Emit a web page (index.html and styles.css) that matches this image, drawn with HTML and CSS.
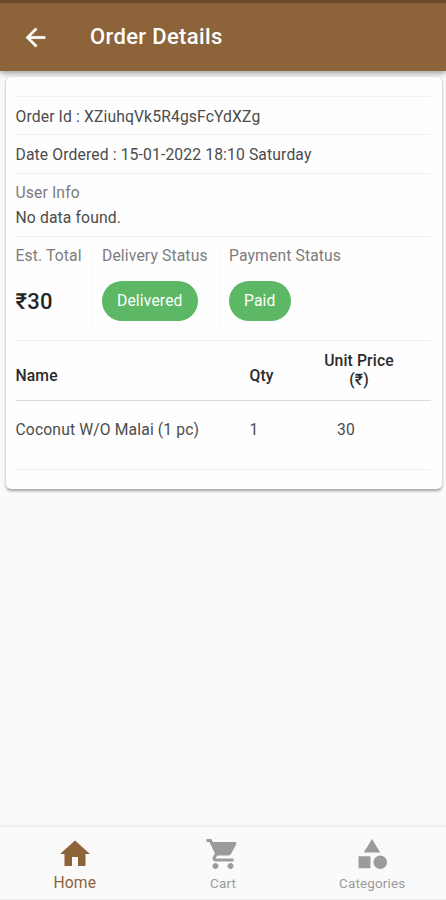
FILE: index.html
```html
<!DOCTYPE html>
<html lang="en">
<head>
<meta charset="utf-8">
<title>Order Details</title>
<link rel="stylesheet" href="styles.css">
</head>
<body>
<header class="appbar">
  <svg class="back" viewBox="0 0 24 24"><path d="M20 11H7.83l5.59-5.59L12 4l-8 8 8 8 1.41-1.41L7.83 13H20v-2z"/></svg>
  <h1>Order Details</h1>
</header>
<main class="content">
  <section class="card">
    <div class="row order-id"><span>Order Id : XZiuhqVk5R4gsFcYdXZg</span></div>
    <div class="row date"><span>Date Ordered : 15-01-2022 18:10 Saturday</span></div>
    <div class="row user"><span class="label">User Info</span><span>No data found.</span></div>
    <div class="row summary">
      <div class="cell"><span class="label">Est. Total</span><strong class="total">₹30</strong></div>
      <div class="cell delivery"><span class="label">Delivery Status</span><span class="chip">Delivered</span></div>
      <div class="cell payment"><span class="label">Payment Status</span><span class="chip">Paid</span></div>
    </div>
    <div class="row grid head"><span>Name</span><span>Qty</span><span class="price">Unit Price<br>(₹)</span></div>
    <div class="row grid item"><span>Coconut W/O Malai (1 pc)</span><span>1</span><span class="amount">30</span></div>
    <div class="row end"></div>
  </section>
</main>
<nav class="tabs">
  <a class="tab active"><svg viewBox="0 0 24 24"><path d="M10 20v-6h4v6h5v-8h3L12 3 2 12h3v8z"/></svg><span>Home</span></a>
  <a class="tab"><svg viewBox="0 0 24 24"><path d="M7 18c-1.1 0-1.99.9-1.99 2S5.9 22 7 22s2-.9 2-2-.9-2-2-2zM1 2v2h2l3.6 7.59-1.35 2.45c-.16.28-.25.61-.25.96 0 1.1.9 2 2 2h12v-2H7.42c-.14 0-.25-.11-.25-.25l.03-.12.9-1.63h7.45c.75 0 1.41-.41 1.75-1.03l3.58-6.49A1 1 0 0 0 20 4H5.21l-.94-2H1zm16 16c-1.1 0-1.99.9-1.99 2s.89 2 1.99 2 2-.9 2-2-.9-2-2-2z"/></svg><span>Cart</span></a>
  <a class="tab categories"><svg viewBox="0 0 24 24"><path d="M12 2l-5.500 9h11z"/><circle cx="17.500" cy="17.500" r="4.500"/><path d="M3 13.500h8v8H3z"/></svg><span>Categories</span></a>
</nav>
</body>
</html>
```
FILE: styles.css
```css
* { box-sizing: border-box; }
body {
  margin: 0;
  height: 900px;
  display: flex;
  flex-direction: column;
  background: #fafafa;
  color: #4c4c4c;
  font: 15.7px/20px Roboto, sans-serif;
  letter-spacing: 0.13px;
  overflow: hidden;
}
.appbar {
  height: 71px;
  flex: none;
  display: flex;
  align-items: center;
  padding: 0 0 0 20.5px;
  background: #8d6339;
  border-top: 3px solid #6a492b;
  color: #fff;
  box-shadow: 0 2px 6px rgba(0, 0, 0, .4);
}
.back { width: 29px; height: 29px; fill: #fff; stroke: #fff; stroke-width: .3; }
h1 { margin: 0 0 0 40.5px; font-size: 22px; font-weight: 500; line-height: 28px; letter-spacing: 0.35px; }
.content { flex: 1; padding: 6px 4px 0 6px; }
.card {
  height: 412px;
  padding: 19px 11px 0 9.5px;
  background: #fefefe;
  border-radius: 5px;
  box-shadow: 0 1.5px 3px rgba(0, 0, 0, .35);
}
.row { border-top: 1px solid #f0f0f0; }
.row span { white-space: nowrap; }
.order-id { height: 38px; padding-top: 9.5px; }
.date { height: 39px; padding-top: 10px; }
.user { height: 63px; padding-top: 9px; display: flex; flex-direction: column; gap: 5px; }
.label { color: #7c7c7c; }
.summary { height: 104px; display: flex; padding: 9px 0 10px; }
.cell { display: flex; flex-direction: column; align-items: flex-start; width: 76.5px; }
.delivery, .payment { border-left: 1px solid #f4f4f4; padding-left: 9px; }
.delivery { width: 127px; }
.payment { width: 150px; }
.total { margin-top: 24px; font-size: 22px; line-height: 24px; font-weight: 500; letter-spacing: 0.3px; color: #252525; }
.chip {
  margin-top: 15px;
  height: 40px;
  padding: 0 15px;
  border-radius: 20px;
  background: #5cb864;
  color: #fff;
  line-height: 40px;
}
.grid { display: grid; grid-template-columns: 234px 59.5px 100px; }
.head { height: 60px; padding-top: 10px; color: #2b2b2b; font-weight: 500; font-size: 15.7px; line-height: 19px; }
.head span { padding-top: 15px; }
.head .price { padding-top: 0; text-align: center; }
.item { height: 69px; padding-top: 19px; border-color: #ddd; }
.amount { padding-left: 28px; }
.tabs {
  flex: none;
  height: 75px;
  display: grid;
  grid-template-columns: repeat(3, 1fr);
  border-top: 2px solid #f0f0f0;
  border-bottom: 1px solid #ededed;
}
.tab { display: flex; flex-direction: column; align-items: center; padding-top: 9px; color: #9b9b9b; font-size: 13.5px; line-height: 16px; }
.tab svg { width: 36px; height: 36px; fill: currentColor; }
.tab span { margin-top: 3px; }
.tab.active { color: #8d6339; font-size: 15.7px; padding-left: 1px; }
.tab.active span { margin-top: 3px; }
.tab.categories { padding-left: 1px; }
```
